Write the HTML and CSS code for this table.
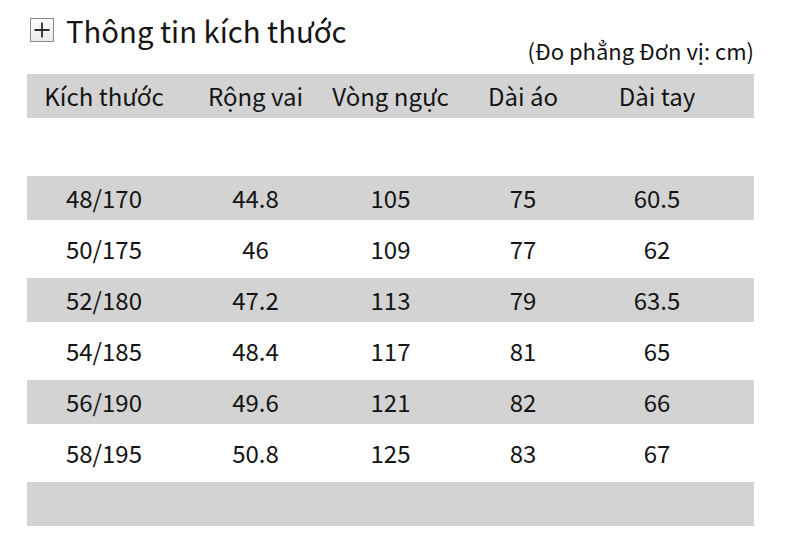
FILE: index.html
```html
<!DOCTYPE html>
<html lang="vi">
<head>
<meta charset="utf-8">
<title>Thông tin kích thước</title>
<link rel="stylesheet" href="styles.css">
</head>
<body>
<div class="page">
  <div class="title-row">
    <span class="plus-box">
      <svg width="16" height="16" viewBox="0 0 16 16"><path d="M8 0.5V15.5M0.5 8H15.5" stroke="#2a2a2a" stroke-width="1.8" fill="none"/></svg>
    </span>
    <h1 class="title">Thông tin kích thước</h1>
  </div>
  <div class="unit">(Đo phẳng Đơn vị: cm)</div>
  <div class="table">
    <div class="row gray head">
      <div class="cell">Kích thước</div><div class="cell">Rộng vai</div><div class="cell">Vòng ngực</div><div class="cell">Dài áo</div><div class="cell">Dài tay</div><div class="cell"></div>
    </div>
    <div class="row white"><div class="cell"></div></div>
    <div class="row gray">
      <div class="cell">48/170</div><div class="cell">44.8</div><div class="cell">105</div><div class="cell">75</div><div class="cell">60.5</div><div class="cell"></div>
    </div>
    <div class="row white">
      <div class="cell">50/175</div><div class="cell">46</div><div class="cell">109</div><div class="cell">77</div><div class="cell">62</div><div class="cell"></div>
    </div>
    <div class="row gray">
      <div class="cell">52/180</div><div class="cell">47.2</div><div class="cell">113</div><div class="cell">79</div><div class="cell">63.5</div><div class="cell"></div>
    </div>
    <div class="row white">
      <div class="cell">54/185</div><div class="cell">48.4</div><div class="cell">117</div><div class="cell">81</div><div class="cell">65</div><div class="cell"></div>
    </div>
    <div class="row gray">
      <div class="cell">56/190</div><div class="cell">49.6</div><div class="cell">121</div><div class="cell">82</div><div class="cell">66</div><div class="cell"></div>
    </div>
    <div class="row white">
      <div class="cell">58/195</div><div class="cell">50.8</div><div class="cell">125</div><div class="cell">83</div><div class="cell">67</div><div class="cell"></div>
    </div>
    <div class="row gray"><div class="cell"></div></div>
  </div>
</div>
</body>
</html>
```
FILE: styles.css
```css
html, body {
  margin: 0;
  padding: 0;
  background: #ffffff;
}
body {
  font-family: "Noto Sans CJK JP", "Noto Sans", "Liberation Sans", sans-serif;
  color: #141414;
}
.page {
  width: 790px;
  height: 553px;
  padding: 17px 36px 0 27px;
  box-sizing: border-box;
}
.title-row {
  display: flex;
  align-items: center;
  gap: 12px;
  height: 26px;
  padding-left: 3px;
}
.plus-box {
  width: 24px;
  height: 24px;
  border: 1px solid #8a8a8a;
  background: linear-gradient(#fbfbfb, #ececec);
  display: flex;
  align-items: center;
  justify-content: center;
  box-sizing: border-box;
}
.title {
  margin: 0;
  font-size: 29.3px;
  font-weight: 400;
  line-height: 26px;
}
.unit {
  text-align: right;
  font-size: 22px;
  line-height: 26px;
  height: 31px;
  padding-bottom: 6px;
  margin-top: -6px;
}
.table {
  display: flex;
  flex-direction: column;
}
.row {
  display: grid;
  grid-template-columns: 154px 149px 121px 144px 124px 1fr;
  align-items: center;
}
.row.gray {
  background: #d3d3d3;
  height: 44px;
}
.row.white {
  background: #ffffff;
  height: 58px;
}
.cell {
  text-align: center;
  font-size: 24px;
  line-height: 30px;
}
```
